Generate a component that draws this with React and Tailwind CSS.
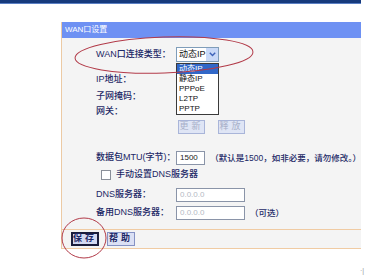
const font = { fontFamily: '"Liberation Sans", "Noto Sans CJK SC", sans-serif' }

function Label({ children }) {
  return <div className="w-[80px] shrink-0 whitespace-nowrap text-[9px] font-medium text-[#1c2866]">{children}</div>
}

function SmallButton({ children, disabled, focused }) {
  return (
    <div
      className={
        focused
          ? 'flex h-[14px] w-[28px] items-center justify-center border-2 border-[#1a1d3c] bg-[#d3d9f2] text-[9px] font-bold tracking-[3px] text-[#1d2866]'
          : disabled
            ? 'flex h-[14px] w-[27px] items-center justify-center border border-[#a9b5d9] bg-[#dfe5f5] text-[9px] tracking-[3px] text-[#a7afc8]'
            : 'flex h-[14px] w-[28px] items-center justify-center border border-[#8592c4] bg-[#dbe0f4] text-[9px] font-bold tracking-[3px] text-[#1d2866]'
      }
    >
      {children}
    </div>
  )
}

function Field({ value, width, muted }) {
  return (
    <div
      className={`flex h-[14px] ${width} items-center border border-[#8a94a8] bg-white pl-[3px] text-[8px] ${
        muted ? 'text-[#b4b9c4]' : 'text-[#222]'
      }`}
    >
      {value}
    </div>
  )
}

const options = ['动态IP', '静态IP', 'PPPoE', 'L2TP', 'PPTP']

export default function App() {
  return (
    <div className="relative h-[277px] w-[378px] overflow-hidden bg-white" style={font}>
      <div className="h-[4px] w-[361px] border-b border-[#5a7fc4] bg-[#173a7c]" />

      <div className="ml-[61px] mt-[18px] flex h-[227px] w-[300px] flex-col border-l border-[#eccaa4] bg-[#f4f4f4]">
        <div className="h-[16px] bg-[#6e91f3] pl-[3px] text-[8px] leading-[16px] text-white">WAN口设置</div>

        <div className="flex flex-col pl-[34px]">
          <div className="mt-[9px] flex h-[15px] items-center">
            <Label>WAN口连接类型：</Label>
            <div className="flex h-[15px] w-[43px] items-center border border-[#7f9db9] bg-white">
              <span className="flex-1 pl-[2px] text-[9px] text-[#111]">动态IP</span>
              <span className="flex h-[13px] w-[12px] items-center justify-center bg-[#c9d9f7]">
                <svg width="7" height="5" viewBox="0 0 7 5">
                  <path d="M0.8 0.8 L3.5 3.6 L6.2 0.8" stroke="#3d62b8" strokeWidth="1.4" fill="none" />
                </svg>
              </span>
            </div>
          </div>

          <div className="mt-[10px] flex h-[16px] items-center">
            <Label>IP地址：</Label>
          </div>
          <div className="mt-[1px] flex h-[16px] items-center">
            <Label>子网掩码：</Label>
          </div>
          <div className="flex h-[14px] items-center">
            <Label>网关：</Label>
          </div>
          <div className="mt-[1px] flex h-[14px] items-center gap-[13px] pl-[82px]">
            <SmallButton disabled>更新</SmallButton>
            <SmallButton disabled>释放</SmallButton>
          </div>

          <div className="mt-[17px] flex h-[14px] items-center">
            <Label>数据包MTU(字节)：</Label>
            <Field value="1500" width="w-[31px]" />
            <span className="ml-[5px] whitespace-nowrap text-[8.5px] font-medium text-[#1c2866]">（默认是1500，如非必要，请勿修改。）</span>
          </div>

          <div className="mt-[3px] flex h-[14px] items-center pl-[5px]">
            <div className="h-[10px] w-[10px] border border-[#8a8f99] bg-white" />
            <span className="ml-[5px] text-[9px] font-medium text-[#1c2866]">手动设置DNS服务器</span>
          </div>

          <div className="mt-[6px] flex h-[13px] items-center">
            <Label>DNS服务器：</Label>
            <Field value="0.0.0.0" width="w-[69px]" muted />
          </div>
          <div className="mt-[5px] flex h-[14px] items-center">
            <Label>备用DNS服务器：</Label>
            <Field value="0.0.0.0" width="w-[69px]" muted />
            <span className="ml-[5px] text-[8.5px] font-medium text-[#1c2866]">（可选）</span>
          </div>
        </div>

        <div className="mt-[9px] flex h-[20px] items-center gap-[8px] border-y border-[#f0cba3] pl-[9px]">
          <SmallButton focused>保存</SmallButton>
          <SmallButton>帮助</SmallButton>
        </div>
      </div>

      <div className="absolute left-[176px] top-[63px] w-[43px] border border-[#3a3a3a] bg-white">
        {options.map((option, index) => (
          <div
            key={option}
            className={`h-[10px] pl-[2px] text-[8px] leading-[10px] ${
              index === 0 ? 'bg-[#3167c8] text-white' : 'text-[#111]'
            }`}
          >
            {option}
          </div>
        ))}
      </div>

      <svg className="pointer-events-none absolute inset-0" width="378" height="277">
        <ellipse cx="164" cy="55" rx="89" ry="18" fill="none" stroke="#b23a48" strokeWidth="1" transform="rotate(-2 164 55)" />
        <ellipse cx="84" cy="238" rx="22" ry="20" fill="none" stroke="#b23a48" strokeWidth="1" />
      </svg>

      <span className="absolute left-[360px] top-[266px] text-[7px] text-[#999]">·|</span>
    </div>
  )
}
